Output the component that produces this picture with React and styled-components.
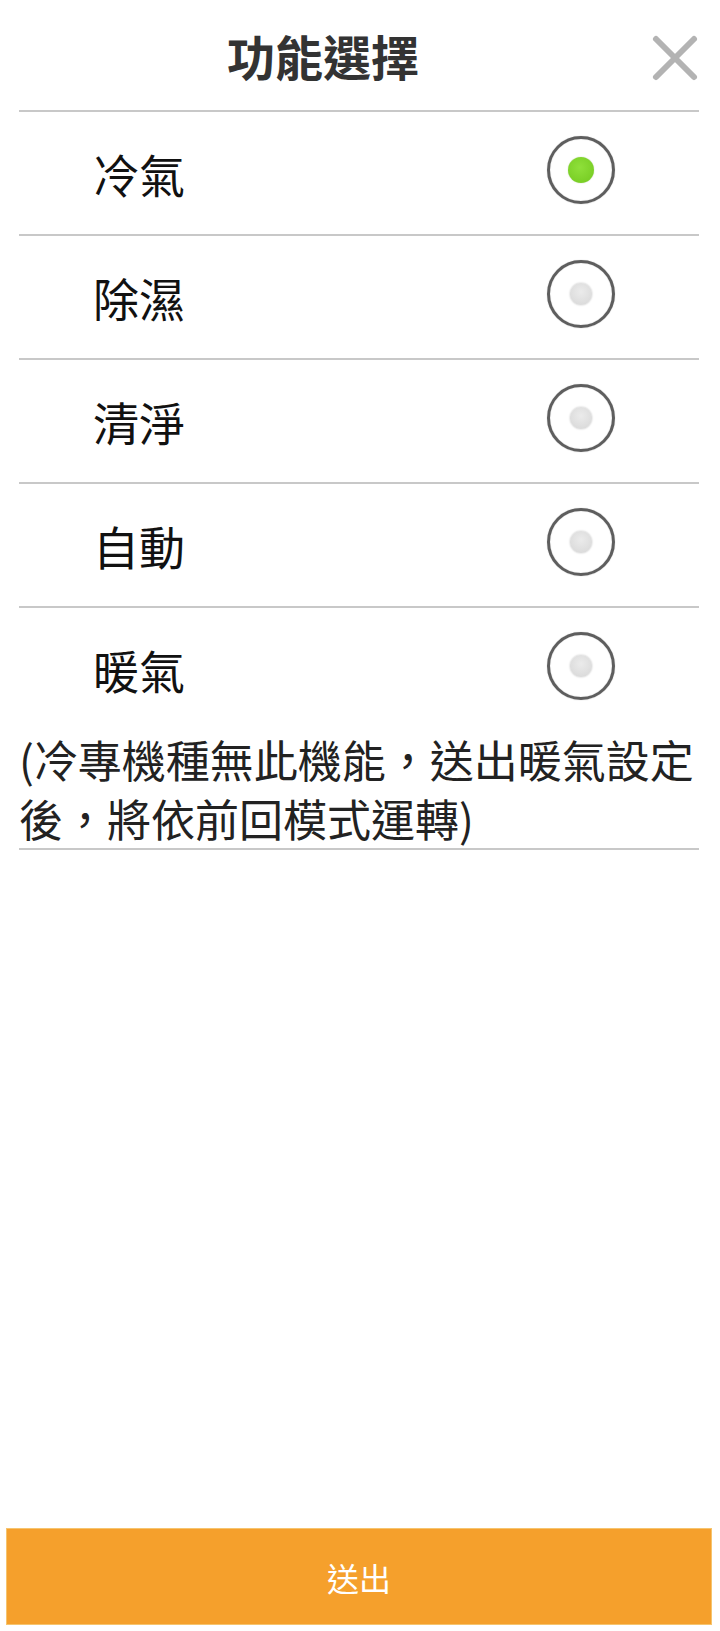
import React, { useState } from 'react';
import styled, { createGlobalStyle } from 'styled-components';

const modes = ['冷氣', '除濕', '清淨', '自動', '暖氣'];

const GlobalStyle = createGlobalStyle`
  html, body {
    margin: 0;
    padding: 0;
    background: #ffffff;
  }
  body {
    font-family: "Noto Sans CJK TC", "Noto Sans", sans-serif;
  }
`;

const App = () => {
  const [selected, setSelected] = useState('冷氣');
  return (
    <>
      <GlobalStyle />
      <Page>
        <Panel>
          <Header>
            <Title>功能選擇</Title>
            <CloseButton aria-label="close">
              <svg width="48" height="48" viewBox="0 0 48 48">
                <path
                  d="M5 5 L43 43 M43 5 L5 43"
                  stroke="#b3b3b3"
                  strokeWidth="6"
                  strokeLinecap="round"
                  fill="none"
                />
              </svg>
            </CloseButton>
          </Header>
          {modes.map((mode, index) => (
            <OptionRow
              key={mode}
              $last={index === modes.length - 1}
              onClick={() => setSelected(mode)}
            >
              <OptionLabel>{mode}</OptionLabel>
              <Radio>
                <RadioDot $checked={selected === mode} />
              </Radio>
            </OptionRow>
          ))}
          <Note>(冷專機種無此機能，送出暖氣設定後，將依前回模式運轉)</Note>
        </Panel>
        <SubmitButton>送出</SubmitButton>
      </Page>
    </>
  );
};

const Page = styled.div`
  display: flex;
  flex-direction: column;
  min-height: 100vh;
  box-sizing: border-box;
`;

const Panel = styled.div`
  display: flex;
  flex-direction: column;
  padding: 0 21px 0 19px;
`;

const Header = styled.div`
  display: flex;
  align-items: center;
  height: 110px;
  border-bottom: 2px solid #c8c8c8;
`;

const Title = styled.h1`
  flex: 1;
  margin: 0;
  text-align: center;
  font-size: 48px;
  font-weight: 700;
  color: #333333;
  line-height: 1;
`;

const CloseButton = styled.button`
  display: flex;
  justify-content: flex-end;
  align-items: center;
  width: 72px;
  height: 60px;
  margin-top: 6px;
  padding: 0;
  border: none;
  background: none;
  cursor: pointer;
`;

const OptionRow = styled.div`
  display: flex;
  align-items: center;
  justify-content: space-between;
  height: 122px;
  padding: 0 84px 0 74px;
  border-bottom: ${({ $last }) => ($last ? 'none' : '2px solid #c8c8c8')};
  cursor: pointer;
`;

const OptionLabel = styled.span`
  font-size: 46px;
  color: #111111;
  line-height: 1;
`;

const Radio = styled.div`
  display: flex;
  align-items: center;
  justify-content: center;
  width: 62px;
  height: 62px;
  margin-bottom: 6px;
  border: 3px solid #5e5e5e;
  border-radius: 50%;
  box-shadow: 0 0 1px rgba(0, 0, 0, 0.35), inset 0 0 1px rgba(0, 0, 0, 0.3);
`;

const RadioDot = styled.div`
  width: ${({ $checked }) => ($checked ? '26px' : '22px')};
  height: ${({ $checked }) => ($checked ? '26px' : '22px')};
  border-radius: 50%;
  background: ${({ $checked }) =>
    $checked
      ? 'radial-gradient(circle at 45% 40%, #8fe03a, #72c81e)'
      : 'radial-gradient(circle at 50% 40%, #ebebeb, #d6d6d6)'};
  box-shadow: ${({ $checked }) =>
    $checked ? '0 0 1px rgba(60, 120, 0, 0.5)' : '0 0 2px rgba(0, 0, 0, 0.25)'};
`;

const Note = styled.p`
  margin: 0;
  font-size: 44px;
  line-height: 59px;
  color: #222222;
  border-bottom: 2px solid #c8c8c8;
`;

const SubmitButton = styled.button`
  margin: auto 8px 6px 6px;
  height: 97px;
  border: 1px solid #f6c46e;
  background: #f5a02c;
  color: #ffffff;
  font-family: "Noto Sans CJK TC", "Noto Sans", sans-serif;
  font-size: 32px;
  cursor: pointer;
`;

export default App;
